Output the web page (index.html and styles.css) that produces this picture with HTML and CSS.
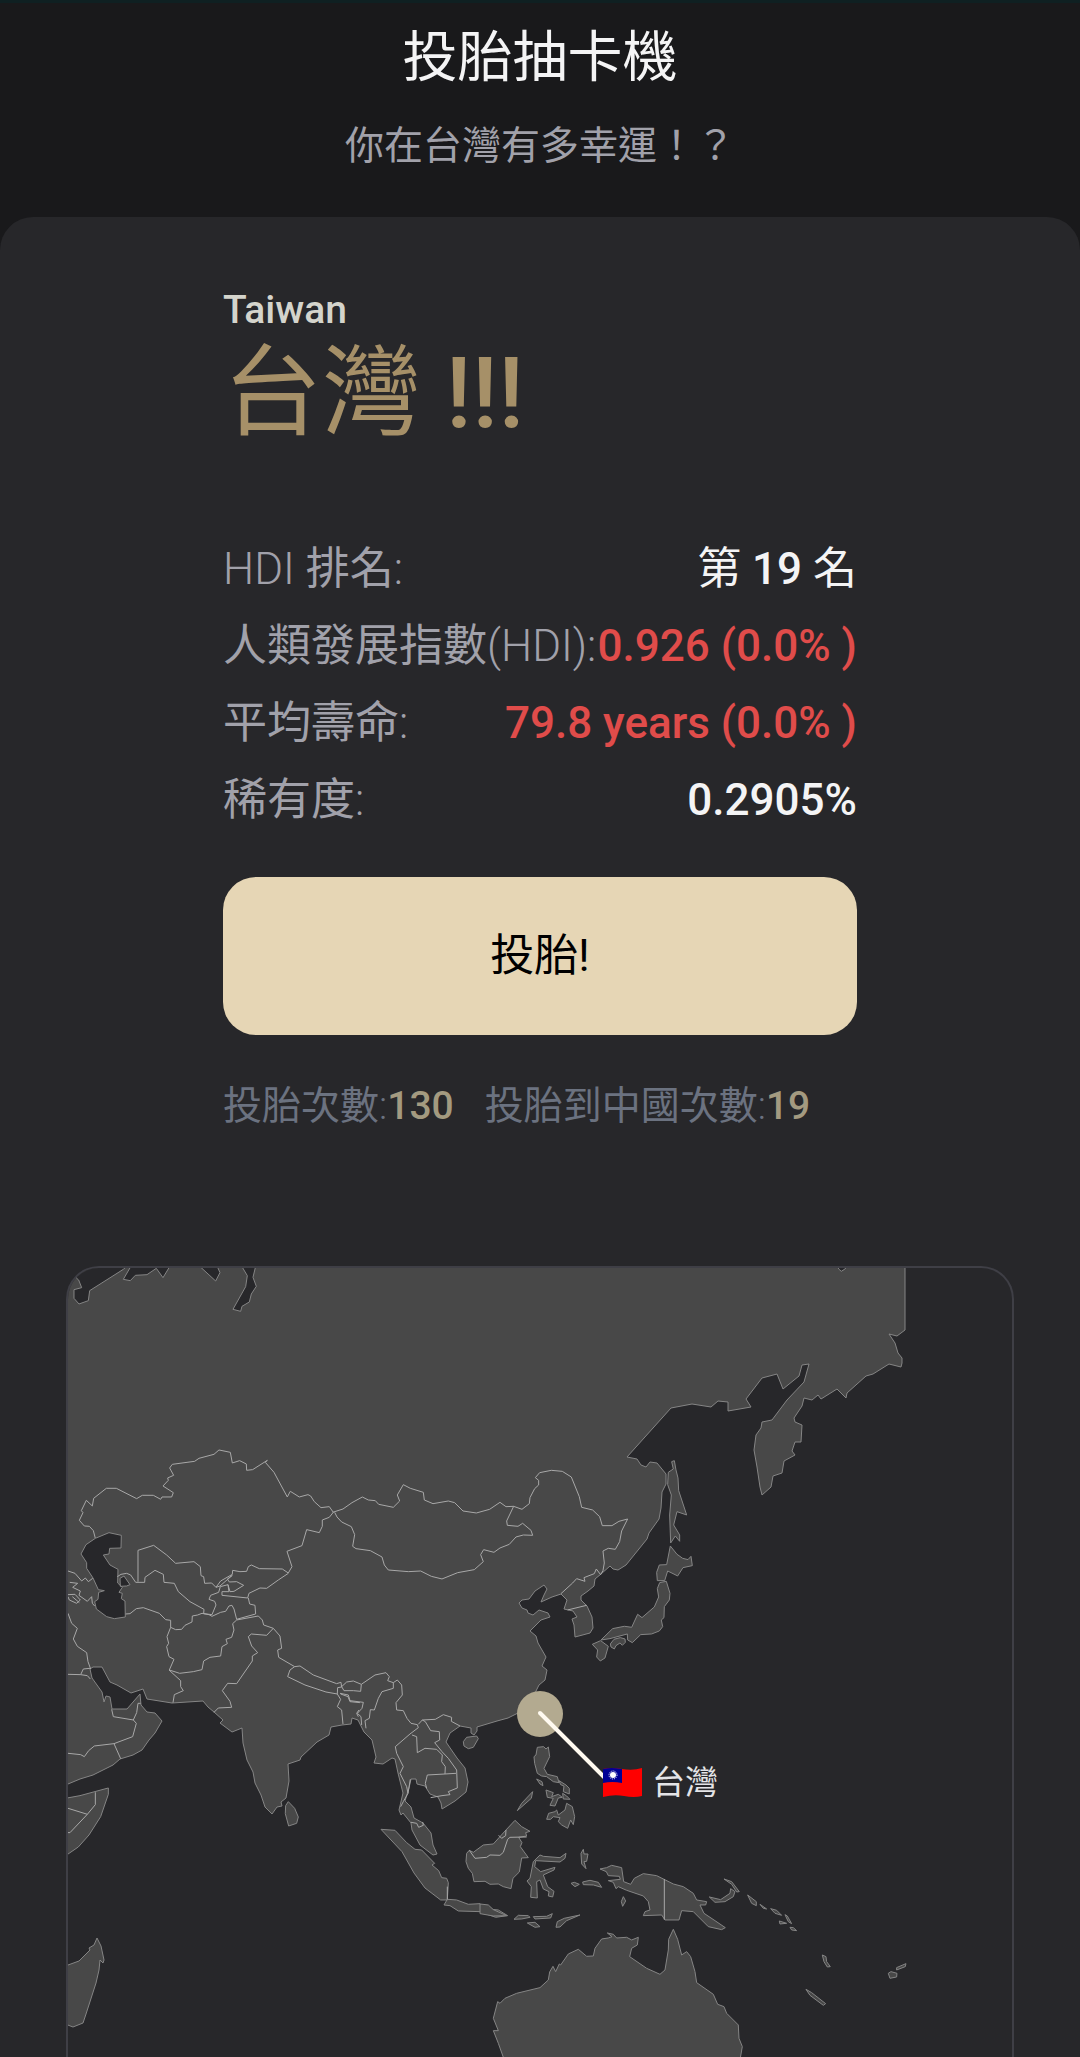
FILE: index.html
```html
<!DOCTYPE html>
<html lang="zh-Hant">
<head>
<meta charset="utf-8">
<meta name="viewport" content="width=device-width, initial-scale=1">
<title>投胎抽卡機</title>
<link rel="stylesheet" href="styles.css">
</head>
<body>
<header class="hero">
  <h1 class="hero-title">投胎抽卡機</h1>
  <p class="hero-subtitle">你在台灣有多幸運！？</p>
</header>
<main class="panel">
  <section class="result">
    <p class="country-en">Taiwan</p>
    <h2 class="country">台灣 <span class="medium">!!!</span></h2>
    <dl class="facts">
      <div class="fact"><dt><span class="light">HDI</span> 排名<span class="light">:</span></dt><dd>第 <span class="medium">19</span> 名</dd></div>
      <div class="fact"><dt>人類發展指數<span class="light">(HDI):</span></dt><dd class="medium loss">0.926 (0.0% )</dd></div>
      <div class="fact"><dt>平均壽命<span class="light">:</span></dt><dd class="medium loss">79.8 years (0.0% )</dd></div>
      <div class="fact"><dt>稀有度<span class="light">:</span></dt><dd class="medium">0.2905%</dd></div>
    </dl>
    <button class="draw" type="button">投胎!</button>
    <div class="counts">
      <span>投胎次數<span class="light">:</span><b>130</b></span>
      <span>投胎到中國次數<span class="light">:</span><b>19</b></span>
    </div>
  </section>
  <section class="map" aria-label="地圖">
    <svg class="map-art" viewBox="68 1268 944 789">
      <!-- Eurasia -->
      <path class="land" d="M50 1260H905V1330L897 1336 889 1334 895 1343 898 1353 902 1358 902 1363 901 1367 889 1364 873 1374 866 1376 847 1393 846 1398 837 1389 821 1399 818 1395 812 1400 804 1398 802 1406 794 1418 795 1422 802 1425 801 1442 795 1442 792 1451 795 1455 784 1461 782 1473 773 1476 771 1487 762 1495 760 1487 757 1467 754 1450 756 1435 761 1428 762 1422 772 1420 787 1400 804 1382 809 1364 802 1365 799 1376 783 1389 777 1374 762 1378 746 1399 751 1407 728 1411 728 1402 718 1401 711 1407 692 1404 671 1408 627 1457 637 1459 641 1465 646 1467 650 1462 657 1463 666 1474 666 1484 662 1492 661 1508 659 1519 649 1533 647 1539 626 1565 618 1570 613 1569 610 1566 601 1574 595 1579 594 1586 588 1591 581 1596 581 1600 587 1606 592 1617 593 1628 590 1633 575 1637 574 1625 572 1619 577 1617 573 1611 564 1609 567 1600 561 1594 552 1597 541 1602 544 1595 547 1589 544 1585 535 1591 529 1599 522 1600 519 1603 522 1608 527 1610 528 1613 533 1615 539 1610 548 1613 550 1617 541 1620 530 1631 536 1636 538 1643 546 1657 542 1666 547 1670 545 1680 539 1685 536 1691 530 1706 518 1713 508 1718 497 1721 477 1727 477 1731 474 1735 471 1733 471 1728 460 1726 450 1733 446 1742 457 1758 465 1768 468 1782 466 1792 455 1801 442 1809 441 1803 438 1797 430 1794 425 1786 417 1784 416 1779 411 1779 409 1788 405 1801 411 1807 414 1818 423 1823 431 1833 433 1845 437 1854 433 1855 420 1845 412 1830 411 1823 403 1813 401 1815 399 1810 403 1793 398 1773 395 1759 392 1758 383 1764 374 1763 376 1757 372 1740 364 1732 358 1720 352 1718 351 1724 342 1725 331 1727 329 1735 317 1742 301 1757 300 1760 288 1764 289 1781 286 1798 281 1802 282 1806 277 1807 272 1814 265 1807 261 1795 255 1783 253 1772 247 1760 243 1743 242 1728 232 1732 220 1723 223 1720 214 1712 208 1707 203 1701 172 1703 147 1699 143 1689 131 1693 117 1685 110 1682 102 1667 93 1667 90 1669 92 1678 102 1692 104 1702 106 1696 110 1697 111 1703 112 1709 127 1709 140 1694 141 1705 147 1712 155 1713 162 1721 155 1733 149 1740 142 1750 133 1755 120 1759 113 1765 93 1775 80 1779 68 1784 50 1790Z"/>
      <!-- Arctic inlets and Siberian border -->
      <g transform="translate(60 1260) scale(.3333)">
        <path class="sea" d="M30 0 50 55 56 60 65 83 42 89V115L57 132 85 122 89 92 190 28 205 15ZM215 15 190 58 211 62 226 46 261 44 289 25 309 53 332 15ZM415 15 467 63 480 38 470 15ZM543 15 562 47 557 80 519 148 542 154 546 139 568 126 574 102 589 79 579 52 588 15Z"/>
        <path class="border" d="M106 835 100 812 88 799 73 798 58 781 69 758 64 752 79 721 97 738 101 715 139 685H169L230 716 247 706H280L302 718 306 711H335L340 698 309 678 325 661 323 654 341 646 329 624 337 613 404 604 417 595 462 583 477 570 511 577 517 609 539 602 559 612 560 631 578 629 622 601 616 607 642 637 682 711 691 694 718 711 744 704 752 708 763 725 783 743 808 740 820 757 808 772 787 780V799L778 818 740 809 726 857 681 874"/>
      </g>
      <!-- Mongolia, northern China, Korea -->
      <g transform="translate(330 1420) scale(.3333)">
        <path class="border" d="M8 277 39 267 66 248 97 231 115 240 136 242 146 253 190 262 209 243 202 225 220 194 241 205 280 217 283 240 309 251 355 243 374 248 399 273 439 279 479 268 510 247 528 260 551 259 576 268 598 251 600 233 614 206 626 195V181L616 173 629 158 664 151 697 154 724 171 748 230 755 262 788 270 809 290 817 317H846L867 304 893 297 875 333 869 365 856 388 835 385 819 393 823 429 819 452 812 464 799 447 793 461 762 473 765 484 740 476 728 489 693 521M14 277 21 291 35 306 64 320 74 344 68 379 78 386 121 392 156 411 163 435 175 450 235 455 272 453 304 469 336 477 383 458 433 449 460 425 452 404 461 389 492 397 510 384 538 373 558 351 580 345 608 346 603 331 578 310 564 319 532 316 530 303 551 259M713 570 770 556"/>
        <path class="land" d="M787 673 812 662 835 679 825 714 811 723 800 711 803 690Z"/>
      </g>
      <!-- Sakhalin and Japan -->
      <g transform="translate(600 1260) scale(.3333)">
        <path class="sea" d="M712 15 716 27 724 34 735 27 745 15Z"/>
        <path class="land" d="M215 605 223 602 228 630 234 654 236 692 260 765 231 755 221 795 239 825 239 844 226 828 212 849 209 765 214 705 203 674 205 637 220 627ZM211 858 231 883 248 895 264 899 273 889 277 917 249 923 233 948 203 933 194 962H172L170 937 178 915 200 914ZM179 968 199 964 210 1000 208 1020 193 1040 192 1073 184 1080 188 1100 178 1113 155 1122 122 1124 97 1148 83 1140 82 1122 30 1136 3 1140 38 1106 73 1099 95 1102 113 1063 126 1073 163 1041 176 1011 172 986ZM31 1152 42 1138 61 1133 75 1137 76 1147 67 1156 60 1149 48 1157 43 1167 33 1161Z"/>
      </g>
      <!-- Central and South Asia, Arabia, Horn of Africa -->
      <g transform="translate(60 1540) scale(.3333)">
        <path class="sea" d="M106 -5 78 14 63 42 80 68V85L99 114 115 149 133 152 116 157 114 178 104 185 109 207 140 230 163 236 196 231 195 183 184 176 187 160 177 157 187 142 173 129 174 88 150 75 130 45 147 42 149 25 183 24 184 -14 147 -22ZM180 115 192 108 210 134 200 138 181 139Z"/>
        <path class="border" d="M172 110 183 103 200 100 212 105 227 127H254L255 112 285 91 310 103 312 127 343 130 355 155 390 185 432 208 431 221 456 224 468 195 464 184 447 178 452 166 476 157 481 140 504 134M234 125V31L281 16 320 45 347 70 402 65 421 80 423 107 431 110 434 130 455 129 468 142 482 123 517 103 518 91 540 95 560 94 565 80 574 75 598 86 667 87 685 99 696 80 681 34M468 142 480 138 517 106 502 117 508 126 530 125 551 136 522 154 510 155 504 134 507 155H486V166L563 174 567 160 600 144 620 145 655 120 685 100M565 174 569 192 585 196 587 222 530 238 522 207 516 196 507 198 497 214 482 217 456 229 447 224 426 220 413 225 397 228 396 246 375 256 365 268 347 269 332 262 332 241 317 239 298 220 250 203 229 206 210 221 197 222M332 262 321 290 326 310 320 320 327 350 342 358 328 390 359 400 400 395 426 389 431 363 450 352 482 348 486 320 502 311 498 298 515 292 522 270 518 251 530 240 595 228 607 240 611 255 640 265 660 288 665 325 653 330 656 352 704 380M327 390 362 422V440L370 452 343 464 339 488M462 517 475 504 515 502 510 484 487 452 503 430 530 431 577 363 577 348 593 338 575 318 565 290 574 282 620 286 640 265M704 380 720 378 760 405 830 431 843 427 845 441 833 443 832 462 798 456 735 435 683 410 690 390ZM832 462 842 478 832 500 845 510 849 552M842 462 864 470 870 485 900 488M897 510 890 520 895 530"/>
        <path class="border" d="M24 93 45 100 65 123 76 114 85 125 98 115M29 127 53 130 38 142 61 153 57 166 82 184 95 170 97 190 104 198M24 164 45 163 61 180 50 190 28 180 24 170M37 170 58 188M24 220 35 250 52 265 40 297 52 319 80 338 84 365 92 387M24 403 62 404 70 387 90 385M62 404 82 407 91 417M155 508 160 530 220 540 229 550 218 590 162 611 103 618 86 632 73 650 62 644 24 640M162 611 182 656M220 540 230 518 234 490 242 490"/>
        <path class="land" d="M676 821 677 797 685 785 704 805 715 831 710 850 686 858ZM0 778 60 767 145 744V763L122 830 87 885 55 921 20 945 0 950Z"/>
        <path class="border" d="M24 805 82 823 106 794V757M82 823 30 878H15"/>
      </g>
      <!-- Indochina and the archipelagos -->
      <g transform="translate(340 1660) scale(.3333)">
        <path class="border" d="M5 80 20 66 40 63 64 73 62 94 40 92 12 92ZM64 73 105 45 138 38 148 50 143 62 160 68 172 60 185 75 187 105 168 128 170 150 190 152 201 175 213 190 232 194 235 203 210 222 166 260 170 280 190 320 180 340 200 380 204 400 190 425 182 440M160 68V85L126 95 115 115 103 150 91 149 88 175 75 182 78 205M0 100 25 105 30 122 70 127 66 145 52 160 63 170 65 195M235 193 247 180 286 178 310 164 335 172 334 184 360 198M247 180 256 185 272 212 298 215 299 240 284 248 306 275 325 295 350 330 352 384 325 395 330 404 306 407 272 413M216 225 230 230 232 278 255 265 290 268 307 285 305 305 316 320 315 342 348 340M315 342 262 345 256 370 260 385M204 400 211 358M213 487 230 490 236 502 250 496 248 486"/>
        <path class="land" d="M370 245 380 232 410 228 415 236 400 262 385 266 372 258ZM123 508 165 511 200 548 225 568 245 570 284 610 276 615 296 632 305 653 320 655 325 668 322 720H302L255 684 222 639 186 575ZM312 735 322 718 350 720 385 733 420 731 435 746 475 750 503 767 467 772 420 755 355 753 330 737ZM380 580 388 571 400 577 430 555 460 552 498 510 525 481 545 500 570 514 557 518 560 528 536 532 546 548 541 560 565 593 545 594 538 636 519 655 513 686 490 680 475 672 450 673 435 664 402 665 397 640 385 625 378 605ZM592 262 611 260 618 267 625 261 629 290 612 325 622 343 652 350 657 368 640 365 620 350 605 348 592 340 584 310 582 290 588 285ZM590 357 606 365 609 377 600 372ZM657 362 678 375 688 385 688 402 670 395 672 378 662 374ZM618 390 640 398 635 410 655 403 667 412 655 414 645 438 630 436 640 415 622 412ZM668 400 680 408 690 418 670 417ZM620 478 626 460 645 455 650 450 655 465 675 450 680 430 697 440 704 470 700 494 692 480 683 505 665 495 655 485 660 473 640 470 632 478ZM532 452 545 430 578 395 574 415Z"/>
        <path class="border" d="M388 571 405 595 440 592 450 585 480 586 490 577 503 538 510 532 560 531M498 510 497 527 485 535 476 526M322 718 322 680"/>
      </g>
      <!-- Sulawesi to Australia -->
      <g transform="translate(480 1700) scale(.3333)">
        <path class="land" d="M180 465 190 469 240 473 258 460 255 475 240 486 167 482 164 500 182 515 225 502 222 510 190 525 203 560 222 574 218 591 205 588 207 575 190 567 180 540 170 545 172 594 152 592 154 560 141 543 150 535 160 485ZM303 460 310 448 312 462 324 462 320 484 312 485 318 506 305 492ZM273 550 283 547 298 553 285 560ZM308 546 330 541 355 547 365 562 340 555 310 554ZM430 590 437 603 428 619 424 605ZM102 658 115 646 145 647 150 652 125 657ZM160 650 200 649 217 641 212 654 165 657ZM142 669 165 667 180 680 165 682ZM228 682 232 665 253 655 300 645 260 662 240 681ZM0 612 25 615 40 629 80 647 40 648 0 641ZM360 507 380 503 395 496 425 503 431 545 452 553 463 535 490 521 530 527 580 552 610 560 640 580 650 600 680 605 677 615 660 615 672 640 705 662 736 683 725 689 685 680 640 635 605 632 597 660 555 660 545 645 490 647 495 635 510 630 505 605 490 588 440 571 415 560 408 566 400 547 385 542 421 538 418 529 385 527 379 515ZM732 537 755 545 778 575 770 576 755 553ZM688 591 722 599 750 580 752 566 765 575 760 590 735 605 705 607ZM803 585 829 605 829 617 815 610ZM840 613 860 627 850 625ZM872 626 890 631 905 646 885 640ZM898 663 920 670 900 672ZM915 644 922 648 935 671 925 665ZM930 682 940 683 950 692 935 690ZM1027 765 1038 770 1040 785 1051 800 1042 801 1032 785ZM978 868 995 878 1037 911 1030 916 990 886ZM1225 820 1233 815 1251 820 1250 831 1230 835ZM1250 803 1278 791 1276 800 1250 810Z"/>
        <path class="border" d="M553 537V659"/>
        <path class="land" d="M80 1100 55 1030 40 992 55 992 40 955 53 905 60 910 75 895 110 880 180 863 205 840 209 816 219 799 227 815 238 792 242 795 265 762 295 748 320 769 340 768 345 745 365 717 385 714 396 710 382 699 400 703 410 714 440 712 455 720 475 712 472 735 455 745 449 770 500 805 540 823 555 810 565 750 566 718 580 688 593 718 605 765 620 755 632 770 645 815 650 848 700 883 713 913 732 920 740 940 775 975 777 1015 787 1040 780 1080 770 1110Z"/>
      </g>
      <!-- Madagascar -->
      <path class="land" d="M60 1966 68 1965 79 1961 90 1950 89 1948 94 1945 97 1938 101 1946 104 1960 103 1963 100 1960 99 1970 96 1983 86 2014 83 2023 73 2027 60 2022Z"/>
      <!-- Marker for the drawn country -->
      <circle class="marker" cx="540" cy="1714" r="23"/>
      <path class="leader" d="M540 1713 604 1777"/>
      <g class="flag">
        <path fill="#f00" d="M603 1769Q611 1767 622 1769T642 1768V1796Q634 1798 624 1796T603 1797Z"/>
        <path fill="#000095" d="M603 1769Q611 1767 622 1769V1783Q612 1781 603 1783Z"/>
        <circle cx="613" cy="1775" r="3" fill="#fff"/>
        <circle cx="613" cy="1775" r="4" fill="none" stroke="#fff" stroke-dasharray="1 1"/>
      </g>
      <text class="marker-label" x="652" y="1794">台灣</text>
    </svg>
  </section>
</main>
</body>
</html>
```
FILE: styles.css
```css
* { box-sizing: border-box; }

body {
  margin: 0;
  min-height: 100vh;
  background: #19191b;
  color: #f4f4f5;
  font-family: Roboto, "Noto Sans CJK TC", sans-serif;
}

h1, h2, p, dl, dd { margin: 0; }

.light { font-weight: 300; }
.medium { font-weight: 500; }

.hero {
  display: flex;
  flex-direction: column;
  align-items: center;
  gap: 23px;
  padding: 16px 22px 43px;
  border-top: 3px solid #0f2022;
  text-align: center;
}

.hero-title {
  font-size: 55px;
  line-height: 77px;
  font-weight: 400;
}

.hero-subtitle {
  color: #a1a1aa;
  font-size: 39px;
  line-height: 55px;
}

.panel {
  padding: 66px 66px 0;
  background: #27272a;
  border-radius: 33px 33px 0 0;
}

.result {
  max-width: 634px;
  margin: 0 auto 132px;
}

.country-en {
  color: #d4d4cc;
  font-size: 39px;
  line-height: 55px;
  font-weight: 500;
}

.country {
  color: #a69068;
  font-size: 99px;
  line-height: 110px;
  font-weight: 400;
}

.facts {
  display: flex;
  flex-direction: column;
  gap: 11px;
  margin: 88px 0 44px;
  font-size: 44px;
  line-height: 66px;
}

.fact {
  display: flex;
  justify-content: space-between;
  white-space: nowrap;
}

.fact dt { color: #a1a1aa; }

.fact .loss { color: #e04c4a; }

.draw {
  width: 100%;
  padding: 46px 44px;
  border: 0;
  border-radius: 33px;
  background: #e6d6b5;
  color: #000;
  font: inherit;
  font-size: 44px;
  line-height: 66px;
}

.counts {
  display: flex;
  flex-wrap: wrap;
  gap: 31px;
  margin-top: 44px;
  color: #6b7280;
  font-size: 39px;
  line-height: 55px;
}

.counts b {
  color: #a39a80;
  font-weight: 500;
}

.map {
  overflow: hidden;
  border: 2px solid #3f3f46;
  border-bottom: 0;
  border-radius: 33px 33px 0 0;
}

.map-art {
  display: block;
  width: 100%;
}

.land, .sea, .border {
  stroke-width: 1px;
  stroke-linejoin: round;
  vector-effect: non-scaling-stroke;
}

.land { fill: #484848; stroke: #858585; }
.sea { fill: #27272a; stroke: #858585; }
.border { fill: none; stroke: #a8a8a8; }

.marker { fill: #b3aa90; }

.leader {
  stroke: #fffaf0;
  stroke-width: 4px;
  stroke-linecap: round;
}

.marker-label {
  fill: #e4e4e7;
  font-size: 33px;
}
```
